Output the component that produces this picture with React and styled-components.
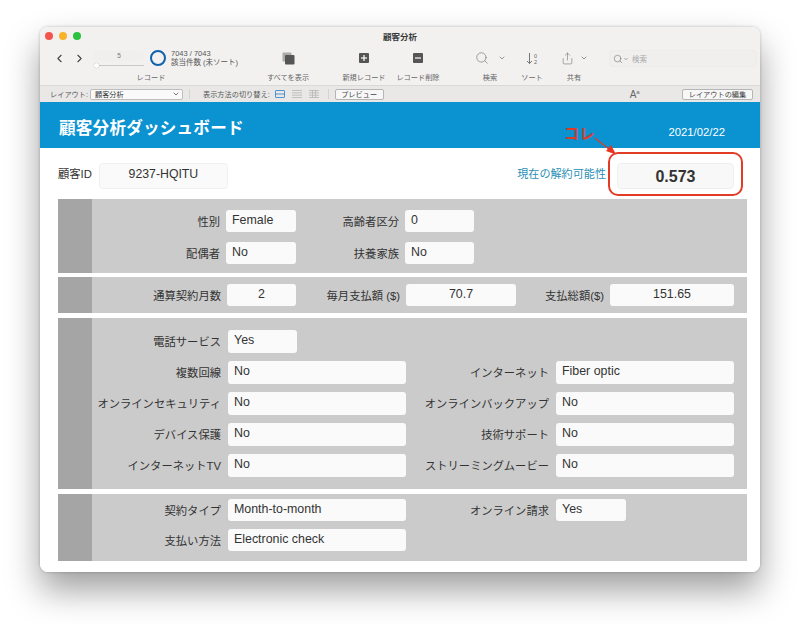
import React from "react";
import styled, { createGlobalStyle } from "styled-components";
import { ChevronLeft, ChevronRight, ChevronDown, Search, Share } from "lucide-react";

const GlobalStyle = createGlobalStyle`
    html, body {
        margin: 0;
        background: #ffffff;
        font-family: "Liberation Sans", "Noto Sans CJK JP", sans-serif;
    }
`;

const Page = styled.div`
    height: 625px;
    overflow: hidden;
    padding: 27px 40px 0;
    box-sizing: border-box;
`;

const WindowShadow = styled.div`
    border-radius: 8px;
    box-shadow: 0 18px 34px rgba(0, 0, 0, 0.38), 0 0 3px rgba(0, 0, 0, 0.25);
`;

const Window = styled.div`
    position: relative;
    width: 720px;
    height: 545px;
    border-radius: 8px;
    background: #ffffff;
    overflow: hidden;
`;

const TitleBar = styled.div`
    height: 58px;
    background: #f2f1f0;
`;

const TitleRow = styled.div`
    position: relative;
    height: 17px;
    display: flex;
    align-items: center;
    justify-content: center;
    font-size: 8.5px;
    font-weight: 700;
    color: #3a3a3a;
    padding-top: 1px;
    box-sizing: border-box;
`;

const Lights = styled.div`
    position: absolute;
    left: 5px;
    top: 5px;
    display: flex;
    gap: 6px;
`;

const Light = styled.span`
    width: 8px;
    height: 8px;
    border-radius: 50%;
    background: ${(p) => p.$color};
`;

const Toolbar = styled.div`
    display: flex;
    padding-left: 11px;
    color: #555;
`;

const ToolSlot = styled.div`
    width: ${(p) => p.$width}px;
    margin-left: ${(p) => p.$left || 0}px;
    flex: none;
    display: flex;
    flex-direction: column;
    align-items: center;
`;

const ToolIcon = styled.div`
    height: 28px;
    margin-bottom: 1px;
    display: flex;
    align-items: center;
    justify-content: center;
    gap: ${(p) => p.$gap || 0}px;
    color: #666;
`;

const ToolLabel = styled.div`
    height: 10px;
    line-height: 10px;
    font-size: 7.2px;
    color: #666;
    white-space: nowrap;
`;

const NavGroup = styled.div`
    width: 40px;
    height: 28px;
    flex: none;
    display: flex;
    align-items: center;
    gap: 7px;
    color: #444;
    padding-left: 2px;
    box-sizing: border-box;
`;

const RecordRow = styled.div`
    height: 28px;
    width: 120px;
    margin-bottom: 1px;
    display: flex;
    align-items: center;
    gap: 6px;
    margin-left: 3px;
    align-self: flex-start;
`;

const SliderBox = styled.div`
    width: 50px;
    flex: none;
    display: flex;
    flex-direction: column;
    align-items: center;
    font-size: 6.5px;
    color: #777;
`;

const SliderNumber = styled.div`
    width: 100%;
    height: 10px;
    line-height: 10px;
    text-align: center;
    background: #f0efee;
    border-radius: 2px;
`;

const SliderTrack = styled.div`
    position: relative;
    width: 100%;
    height: 1px;
    margin-top: 4px;
    background: #c8c8c8;

    &::before {
        content: "";
        position: absolute;
        left: 0;
        top: -2px;
        width: 5px;
        height: 5px;
        border-radius: 50%;
        background: #fff;
        box-shadow: 0 0 1px rgba(0, 0, 0, 0.4);
    }
`;

const ProgressRing = styled.div`
    width: 16px;
    height: 16px;
    box-sizing: border-box;
    border: 2.5px solid #0f62ad;
    border-radius: 50%;
    flex: none;
`;

const Counter = styled.div`
    font-size: 7.5px;
    line-height: 9.5px;
    color: #555;
    white-space: nowrap;
    margin-left: -1px;
`;

const SearchField = styled.div`
    width: 148px;
    height: 17px;
    margin: 6px 0 0 11px;
    flex: none;
    border-radius: 4px;
    background: #f0efee;
    border: 1px solid #ebebea;
    box-sizing: border-box;
    display: flex;
    align-items: center;
    padding-left: 3px;
    font-size: 7.5px;
    color: #aaa;

    svg {
        color: #666;
    }

    span {
        margin-left: 3px;
    }
`;

const LayoutBar = styled.div`
    height: 17px;
    background: #e9e8e7;
    border-top: 1px solid #d9d9d8;
    box-sizing: border-box;
    display: flex;
    align-items: center;
    padding: 0 7px 0 10px;
    font-size: 7.2px;
    color: #555;
    white-space: nowrap;
`;

const LayoutSelect = styled.div`
    width: 93px;
    height: 11px;
    box-sizing: border-box;
    margin-left: 2px;
    border: 1px solid #bdbdbd;
    border-radius: 2px;
    background: #fafafa;
    display: flex;
    align-items: center;
    justify-content: space-between;
    padding: 0 2px 0 4px;
    color: #333;
`;

const BarDivider = styled.span`
    width: 1px;
    height: 10px;
    background: #d4d4d4;
    margin: ${(p) => p.$margin};
`;

const ViewIcons = styled.div`
    display: flex;
    align-items: center;
    gap: 7px;
    margin-left: 5px;
`;

const BarButton = styled.div`
    height: 11px;
    line-height: 9px;
    box-sizing: border-box;
    border: 1px solid #b5b5b5;
    border-radius: 2px;
    background: #f7f7f7;
    text-align: center;
    color: #444;
    width: ${(p) => p.$width}px;
    margin-left: ${(p) => p.$left || 0};
`;

const FontSizeMark = styled.span`
    margin-left: 246px;
    font-size: 10px;
    color: #666;

    sup {
        font-size: 6px;
        line-height: 0;
    }
`;

const Header = styled.div`
    height: 46px;
    background: #0a92d1;
    color: #ffffff;
    display: flex;
    align-items: center;
    justify-content: space-between;
    padding: 0 35px 0 19px;
`;

const HeaderTitle = styled.h1`
    margin: 3px 0 0;
    font-size: 16.6px;
    font-weight: 700;
    letter-spacing: 0.2px;
`;

const HeaderDate = styled.span`
    font-size: 11.3px;
    margin-top: 13px;
`;

const Body = styled.div`
    padding: 15px 13px 0 18px;
    display: flex;
    flex-direction: column;
`;

const TopRow = styled.div`
    display: flex;
    align-items: center;
    height: 26px;
    margin-bottom: 10px;
    font-size: 11.3px;
    color: #333;
`;

const TopLabel = styled.span`
    padding-bottom: 6px;
    color: ${(p) => p.$color || "#333"};
    margin-left: ${(p) => p.$left || 0};
    font-size: ${(p) => p.$size || 11.3}px;
`;

const IdField = styled.div`
    margin-left: 7px;
    width: 129px;
    height: 26px;
    box-sizing: border-box;
    border: 1px solid #f0f0f0;
    border-radius: 4px;
    background: #fafafa;
    font-size: 12.3px;
    line-height: 20px;
    text-align: center;
`;

const ChurnValue = styled.div`
    margin: 0 13px 0 11px;
    width: 117px;
    height: 26px;
    box-sizing: border-box;
    border: 1px solid #efefef;
    border-radius: 4px;
    background: #f8f8f8;
    font-size: 16px;
    font-weight: 700;
    line-height: 25px;
    text-align: center;
    color: #333;
`;

const Section = styled.section`
    display: flex;
    height: ${(p) => p.$height}px;
    margin-top: ${(p) => p.$top || 0}px;
    background: #cbcbcb;
`;

const SectionTab = styled.div`
    width: 34px;
    flex: none;
    background: #a5a5a5;
`;

const FieldGrid = styled.div`
    flex: 1;
    display: grid;
    grid-template-columns: ${(p) => p.$columns};
    grid-auto-rows: ${(p) => p.$rowHeight}px;
    row-gap: ${(p) => p.$rowGap}px;
    padding-top: ${(p) => p.$top}px;
`;

const Label = styled.label`
    font-size: 11.3px;
    color: #333;
    text-align: right;
    white-space: nowrap;
    padding-right: ${(p) => p.$gap || 7}px;
    align-self: center;
    margin-top: -1px;
`;

const Field = styled.div`
    display: flex;
    align-items: center;
    justify-content: ${(p) => (p.$center ? "center" : "flex-start")};
    box-sizing: border-box;
    width: ${(p) => (p.$width ? `${p.$width}px` : "auto")};
    background: #fafafa;
    border-radius: 3px;
    font-size: 12.4px;
    color: #333;
    padding: 0 0 3px ${(p) => (p.$center ? 0 : 6)}px;
`;

const Spacer = styled.div``;

const Callout = styled.div`
    position: absolute;
    left: 568px;
    top: 125px;
    width: 135px;
    height: 44px;
    box-sizing: border-box;
    border: 2px solid #e23b26;
    border-radius: 10px;
`;

const CalloutText = styled.div`
    position: absolute;
    left: 524px;
    top: 95px;
    font-size: 15px;
    font-weight: 700;
    letter-spacing: 0.5px;
    color: #dd3b2a;
`;

const CalloutArrow = styled.svg`
    position: absolute;
    left: 550px;
    top: 110px;
`;

function SquareIcon({ minus }) {
    return (
        <svg width="10" height="10" viewBox="0 0 10 10">
            <rect width="10" height="10" rx="1" fill="#555" />
            <rect x="2" y="4.4" width="6" height="1.2" fill="#fff" />
            {!minus && <rect x="4.4" y="2" width="1.2" height="6" fill="#fff" />}
        </svg>
    );
}

function ShowAllIcon() {
    return (
        <svg width="13" height="13" viewBox="0 0 13 13">
            <rect x="0.5" y="0.5" width="9" height="9" rx="1" fill="#aaa" />
            <rect x="3" y="3" width="9.5" height="9.5" rx="1" fill="#555" />
        </svg>
    );
}

function SortIcon() {
    return (
        <svg width="13" height="13" viewBox="0 0 13 13" fill="none" stroke="#666">
            <path d="M3.5 1v10.5M1 9l2.5 2.5L6 9" strokeWidth="0.9" />
            <text x="8" y="5.5" fontSize="5.5" fill="#666" stroke="none">0</text>
            <text x="8" y="12" fontSize="5.5" fill="#666" stroke="none">2</text>
        </svg>
    );
}

function ViewIcon({ rows, cols, color, boxed }) {
    const lines = [];
    for (let i = 1; i < rows; i++) {
        const y = 0.5 + (i * 7) / rows;
        lines.push(<path key={i} d={`M0 ${y}H10`} />);
    }
    for (let i = 1; i < cols; i++) {
        const x = 0.5 + (i * 9) / cols;
        lines.push(<path key={`c${i}`} d={`M${x} 0V8`} />);
    }
    return (
        <svg width="10" height="8" viewBox="0 0 10 8" fill="none" stroke={color} strokeWidth="0.8">
            {boxed ? <rect x="0.5" y="0.5" width="9" height="7" rx="0.5" /> : <path d="M0 0.5H10M0 7.5H10" />}
            {lines}
        </svg>
    );
}

export default function App() {
    return (
        <>
            <GlobalStyle />
            <Page>
                <WindowShadow>
                    <Window>
                        <TitleBar>
                            <TitleRow>
                                <Lights>
                                    <Light $color="#f4544d" />
                                    <Light $color="#f8b32b" />
                                    <Light $color="#2ac23f" />
                                </Lights>
                                顧客分析
                            </TitleRow>
                            <Toolbar>
                                <NavGroup>
                                    <ChevronLeft size={13} strokeWidth={2} />
                                    <ChevronRight size={13} strokeWidth={2} />
                                </NavGroup>
                                <ToolSlot $width={120}>
                                    <RecordRow>
                                        <SliderBox>
                                            <SliderNumber>5</SliderNumber>
                                            <SliderTrack />
                                        </SliderBox>
                                        <ProgressRing />
                                        <Counter>
                                            7043 / 7043
                                            <br />
                                            該当件数 (未ソート)
                                        </Counter>
                                    </RecordRow>
                                    <ToolLabel>レコード</ToolLabel>
                                </ToolSlot>
                                <ToolSlot $width={60} $left={47}>
                                    <ToolIcon><ShowAllIcon /></ToolIcon>
                                    <ToolLabel>すべてを表示</ToolLabel>
                                </ToolSlot>
                                <ToolSlot $width={60} $left={16}>
                                    <ToolIcon><SquareIcon /></ToolIcon>
                                    <ToolLabel>新規レコード</ToolLabel>
                                </ToolSlot>
                                <ToolSlot $width={48}>
                                    <ToolIcon><SquareIcon minus /></ToolIcon>
                                    <ToolLabel>レコード削除</ToolLabel>
                                </ToolSlot>
                                <ToolSlot $width={48} $left={24}>
                                    <ToolIcon $gap={9}>
                                        <Search size={14} strokeWidth={1} />
                                        <ChevronDown size={8} strokeWidth={2} />
                                    </ToolIcon>
                                    <ToolLabel>検索</ToolLabel>
                                </ToolSlot>
                                <ToolSlot $width={36}>
                                    <ToolIcon><SortIcon /></ToolIcon>
                                    <ToolLabel>ソート</ToolLabel>
                                </ToolSlot>
                                <ToolSlot $width={48}>
                                    <ToolIcon $gap={6}>
                                        <Share size={13} strokeWidth={1} />
                                        <ChevronDown size={8} strokeWidth={2} />
                                    </ToolIcon>
                                    <ToolLabel>共有</ToolLabel>
                                </ToolSlot>
                                <SearchField>
                                    <Search size={10} strokeWidth={1.3} />
                                    <ChevronDown size={6} strokeWidth={2} />
                                    <span>検索</span>
                                </SearchField>
                            </Toolbar>
                        </TitleBar>
                        <LayoutBar>
                            レイアウト:
                            <LayoutSelect>
                                顧客分析
                                <ChevronDown size={8} strokeWidth={2} />
                            </LayoutSelect>
                            <BarDivider $margin="0 13px 0 6px" />
                            表示方法の切り替え:
                            <ViewIcons>
                                <ViewIcon rows={2} cols={1} color="#2b7fd0" boxed />
                                <ViewIcon rows={3} cols={1} color="#b5b5b5" />
                                <ViewIcon rows={3} cols={3} color="#b5b5b5" />
                            </ViewIcons>
                            <BarDivider $margin="0 6px 0 9px" />
                            <BarButton $width={49}>プレビュー</BarButton>
                            <FontSizeMark>A<sup>a</sup></FontSizeMark>
                            <BarButton $width={71} $left="auto">レイアウトの編集</BarButton>
                        </LayoutBar>
                        <Header>
                            <HeaderTitle>顧客分析ダッシュボード</HeaderTitle>
                            <HeaderDate>2021/02/22</HeaderDate>
                        </Header>
                        <Body>
                            <TopRow>
                                <TopLabel>顧客ID</TopLabel>
                                <IdField>9237-HQITU</IdField>
                                <TopLabel $color="#2b8fb5" $left="auto" $size={11.1}>現在の解約可能性</TopLabel>
                                <ChurnValue>0.573</ChurnValue>
                            </TopRow>
                            <Section $height={74}>
                                <SectionTab />
                                <FieldGrid $columns="134px 70px 109px 69px" $rowHeight={22} $rowGap={10} $top={11}>
                                    <Label $gap={6}>性別</Label>
                                    <Field>Female</Field>
                                    <Label $gap={6}>高齢者区分</Label>
                                    <Field>0</Field>
                                    <Label $gap={6}>配偶者</Label>
                                    <Field>No</Field>
                                    <Label $gap={6}>扶養家族</Label>
                                    <Field>No</Field>
                                </FieldGrid>
                            </Section>
                            <Section $height={36} $top={4}>
                                <SectionTab />
                                <FieldGrid $columns="135px 69px 110px 110px 94px 124px" $rowHeight={22} $rowGap={0} $top={7}>
                                    <Label $gap={6}>通算契約月数</Label>
                                    <Field $center>2</Field>
                                    <Label $gap={6}>毎月支払額 ($)</Label>
                                    <Field $center>70.7</Field>
                                    <Label $gap={6}>支払総額($)</Label>
                                    <Field $center>151.65</Field>
                                </FieldGrid>
                            </Section>
                            <Section $height={171} $top={5}>
                                <SectionTab />
                                <FieldGrid $columns="136px 178px 150px 178px" $rowHeight={23} $rowGap={8} $top={12}>
                                    <Label>電話サービス</Label>
                                    <Field $width={69}>Yes</Field>
                                    <Spacer />
                                    <Spacer />
                                    <Label>複数回線</Label>
                                    <Field>No</Field>
                                    <Label>インターネット</Label>
                                    <Field>Fiber optic</Field>
                                    <Label>オンラインセキュリティ</Label>
                                    <Field>No</Field>
                                    <Label>オンラインバックアップ</Label>
                                    <Field>No</Field>
                                    <Label>デバイス保護</Label>
                                    <Field>No</Field>
                                    <Label>技術サポート</Label>
                                    <Field>No</Field>
                                    <Label>インターネットTV</Label>
                                    <Field>No</Field>
                                    <Label>ストリーミングムービー</Label>
                                    <Field>No</Field>
                                </FieldGrid>
                            </Section>
                            <Section $height={67} $top={5}>
                                <SectionTab />
                                <FieldGrid $columns="136px 178px 150px 178px" $rowHeight={22} $rowGap={8} $top={5}>
                                    <Label>契約タイプ</Label>
                                    <Field>Month-to-month</Field>
                                    <Label>オンライン請求</Label>
                                    <Field $width={70}>Yes</Field>
                                    <Label>支払い方法</Label>
                                    <Field>Electronic check</Field>
                                </FieldGrid>
                            </Section>
                        </Body>
                        <CalloutText>コレ</CalloutText>
                        <CalloutArrow width="30" height="22" viewBox="0 0 30 22">
                            <path d="M5 1L20 13" stroke="#dd3b2a" strokeWidth="1.2" />
                            <path d="M26 17.5L16 14L21 8Z" fill="#e8341f" />
                        </CalloutArrow>
                        <Callout />
                    </Window>
                </WindowShadow>
            </Page>
        </>
    );
}
